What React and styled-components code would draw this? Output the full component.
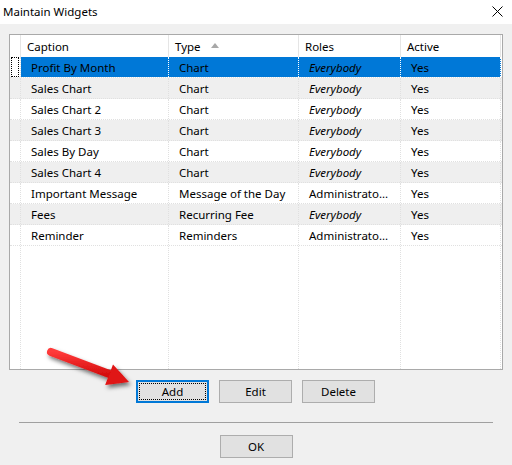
import React from "react";
import styled, { createGlobalStyle } from "styled-components";

/*
  Maintain Widgets dialog: a list view of dashboard widgets with
  add / edit / delete actions and an OK button.
*/
const widgets = [
  { caption: "Profit By Month", type: "Chart", roles: "Everybody", active: "Yes" },
  { caption: "Sales Chart", type: "Chart", roles: "Everybody", active: "Yes" },
  { caption: "Sales Chart 2", type: "Chart", roles: "Everybody", active: "Yes" },
  { caption: "Sales Chart 3", type: "Chart", roles: "Everybody", active: "Yes" },
  { caption: "Sales By Day", type: "Chart", roles: "Everybody", active: "Yes" },
  { caption: "Sales Chart 4", type: "Chart", roles: "Everybody", active: "Yes" },
  { caption: "Important Message", type: "Message of the Day", roles: "Administrato...", active: "Yes" },
  { caption: "Fees", type: "Recurring Fee", roles: "Everybody", active: "Yes" },
  { caption: "Reminder", type: "Reminders", roles: "Administrato...", active: "Yes" },
];

const App = () => {
  return (
    <Window>
      <GlobalStyle />
      <TitleBar>
        <Title>Maintain Widgets</Title>
        <CloseButton>
          <svg width="11" height="11" viewBox="0 0 11 11">
            <path d="M0.5 0.5 L10.5 10.5 M10.5 0.5 L0.5 10.5" stroke="#000" strokeWidth="1" />
          </svg>
        </CloseButton>
      </TitleBar>

      <Body>
        <ListView>
          <HeaderRow>
            <HeaderCell />
            <HeaderCell>Caption</HeaderCell>
            <HeaderCell>
              Type
              <SortArrow />
            </HeaderCell>
            <HeaderCell>Roles</HeaderCell>
            <HeaderCell>Active</HeaderCell>
          </HeaderRow>
          {widgets.map((row, i) => (
            <Row key={row.caption} $striped={i % 2 === 1}>
              <Indicator>{i === 0 && <FocusMark />}</Indicator>
              <Cell $selected={i === 0}>{row.caption}</Cell>
              <Cell $selected={i === 0}>{row.type}</Cell>
              <Cell $selected={i === 0} $italic={row.roles === "Everybody"}>
                {row.roles}
              </Cell>
              <Cell $selected={i === 0}>{row.active}</Cell>
            </Row>
          ))}
          <FillerRow>
            <Indicator />
            <Cell />
            <Cell />
            <Cell />
            <Cell />
          </FillerRow>
        </ListView>

        <ActionRow>
          <Button $default>
            <span>Add</span>
          </Button>
          <Button>Edit</Button>
          <Button>Delete</Button>
        </ActionRow>

        <Separator />

        <FooterRow>
          <Button>OK</Button>
        </FooterRow>
      </Body>

      <Pointer width="100" height="56" viewBox="0 0 100 56">
        <defs>
          <filter id="arrowShadow" x="-20%" y="-30%" width="150%" height="180%">
            <feDropShadow dx="2" dy="3" stdDeviation="2" floodColor="#000" floodOpacity="0.55" />
          </filter>
          <linearGradient id="arrowFill" x1="0" y1="0" x2="0" y2="1">
            <stop offset="0" stopColor="#ff3a3a" />
            <stop offset="1" stopColor="#d40d0d" />
          </linearGradient>
        </defs>
        <g filter="url(#arrowShadow)">
          <line x1="11" y1="12" x2="72" y2="35" stroke="url(#arrowFill)" strokeWidth="8" strokeLinecap="round" />
          <polygon points="89,42 65.2,45 73,24.5" fill="#e01212" />
        </g>
      </Pointer>
    </Window>
  );
};

const GlobalStyle = createGlobalStyle`
  html, body {
    margin: 0;
    padding: 0;
    background: #f0f0f0;
  }
  body {
    font-family: "Noto Sans", "Open Sans", sans-serif;
    font-size: 11.5px;
    color: #000;
  }
`;

const Window = styled.div`
  position: relative;
  width: 512px;
  height: 465px;
  display: flex;
  flex-direction: column;
  background: #f0f0f0;
  overflow: hidden;
`;

const TitleBar = styled.div`
  height: 24px;
  background: #fff;
  display: flex;
  align-items: center;
  justify-content: space-between;
  padding: 0 9px 0 3px;
  flex-shrink: 0;
`;

const Title = styled.span`
  font-size: 11.5px;
  line-height: 1;
  margin-top: -1px;
`;

const CloseButton = styled.span`
  display: flex;
  align-items: center;
  margin-top: -2px;
`;

const Body = styled.div`
  display: flex;
  flex-direction: column;
  padding: 10px 9px 0;
`;

const ListView = styled.div`
  height: 336px;
  box-sizing: border-box;
  border: 1px solid #a9a9a9;
  background: #fff;
  display: flex;
  flex-direction: column;
`;

const columns = "11px 148px 130px 102px 100px";

const HeaderRow = styled.div`
  display: grid;
  grid-template-columns: ${columns};
  height: 22px;
  flex-shrink: 0;
`;

const HeaderCell = styled.div`
  display: flex;
  align-items: center;
  padding-left: 6px;
  border-right: 1px solid #e5e5e5;
  white-space: nowrap;
`;

const SortArrow = styled.span`
  margin-left: 10px;
  width: 0;
  height: 0;
  border-left: 4.5px solid transparent;
  border-right: 4.5px solid transparent;
  border-bottom: 5px solid #a8a8a8;
  margin-top: -2px;
`;

const Row = styled.div`
  display: grid;
  grid-template-columns: ${columns};
  height: 21px;
  flex-shrink: 0;
  box-sizing: border-box;
  border-bottom: 1px dotted #e0e0e0;
  background: ${(p) => (p.$striped ? "#efefef" : "#fff")};
`;

const FillerRow = styled(Row)`
  flex: 1;
  border-bottom: none;
  background: #fff;
`;

const Indicator = styled.div`
  position: relative;
  border-right: 1px dotted #e0e0e0;
`;

const FocusMark = styled.span`
  position: absolute;
  left: 1px;
  top: 0;
  width: 8px;
  height: 20px;
  box-sizing: border-box;
  border: 1px dotted #000;
`;

const Cell = styled.div`
  display: flex;
  align-items: center;
  padding-left: 10px;
  overflow: hidden;
  white-space: nowrap;
  border-right: 1px dotted #e0e0e0;
  background: ${(p) => (p.$selected ? "#0078d7" : "transparent")};
  border-right-color: ${(p) => (p.$selected ? "#fff" : "#e0e0e0")};
  font-style: ${(p) => (p.$italic ? "italic" : "normal")};
`;

const ActionRow = styled.div`
  display: flex;
  justify-content: center;
  gap: 10px;
  margin-top: 10px;
  margin-left: -1px;
`;

const Button = styled.button`
  position: relative;
  width: 73px;
  height: 23px;
  box-sizing: border-box;
  padding: 0;
  font: inherit;
  color: #000;
  background: #e1e1e1;
  border: 1px solid ${(p) => (p.$default ? "#0078d7" : "#adadad")};
  box-shadow: ${(p) => (p.$default ? "inset 0 0 0 1px #0078d7" : "none")};

  ${(p) =>
    p.$default &&
    `
    &::after {
      content: "";
      position: absolute;
      inset: 2px;
      border: 1px dotted #000;
    }
  `}
`;

const Separator = styled.div`
  height: 1px;
  background: #a0a0a0;
  margin: 19px 10px 0;
`;

const FooterRow = styled.div`
  display: flex;
  justify-content: center;
  margin-top: 12px;
`;

const Pointer = styled.svg`
  position: absolute;
  left: 40px;
  top: 340px;
  overflow: visible;
`;

export default App;
